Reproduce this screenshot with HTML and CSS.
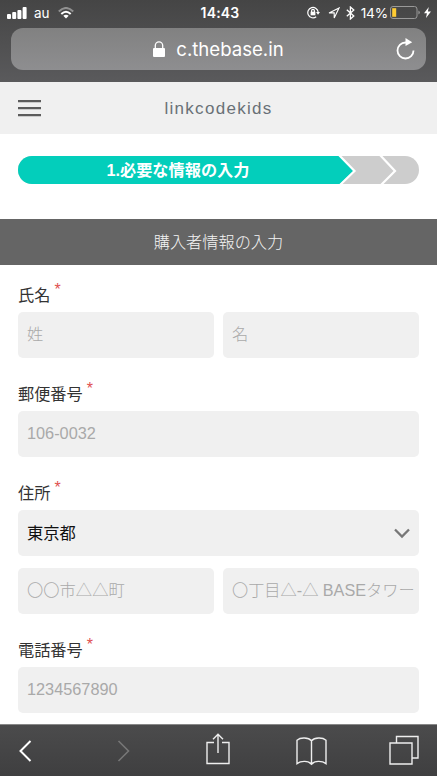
FILE: index.html
```html
<!DOCTYPE html>
<html lang="ja">
<head>
<meta charset="utf-8">
<meta name="viewport" content="width=device-width">
<title>linkcodekids</title>
<link rel="stylesheet" href="styles.css">
</head>
<body>
<div class="phone">
  <div class="browser-top">
    <div class="status">
      <div class="status-left">
        <svg width="20" height="12" viewBox="0 0 20 12" fill="#fff"><rect x="0" y="7" width="4" height="5" rx="1"/><rect x="5.2" y="5" width="4" height="7" rx="1"/><rect x="10.4" y="3" width="4" height="9" rx="1"/><rect x="15.6" y="0" width="4" height="12" rx="1"/></svg>
        <span class="carrier">au</span>
        <svg width="16" height="12" viewBox="0 0 16 12" fill="none" stroke="#fff" stroke-width="2"><path d="M.8 4.5Q8-2.5 15.2 4.5" stroke-opacity=".4"/><path d="M3.3 7Q8 2.5 12.7 7"/><path d="M8 11.5 5.3 8.8Q8 6.8 10.7 8.8Z" fill="#fff" stroke="none"/></svg>
      </div>
      <span class="time">14:43</span>
      <div class="status-right">
        <svg class="lock-rotation" width="13" height="13" viewBox="0 0 13 13" fill="none" stroke="#fff" stroke-width="1.2"><path d="M9.2 10.8A5.2 5.2 0 1 1 11.2 6.2"/><path d="M9 6h4l-2 2.8z" fill="#fff" stroke="none"/><rect x="3.6" y="5.7" width="4.8" height="3.6" fill="#fff" stroke="none"/><path d="M4.6 6V4.7a1.4 1.4 0 0 1 2.8 0V6"/></svg>
        <svg class="location" width="12" height="12" viewBox="0 0 12 12" fill="none" stroke="#fff" stroke-width="1.1"><path d="M1 5.9 11 1 6.2 11V5.9Z"/></svg>
        <svg class="bluetooth" width="9" height="14" viewBox="0 0 9 14" fill="none" stroke="#fff" stroke-width="1.3"><path d="m.8 3.8 7 6.2-3.4 3V1l3.4 3-7 6.2"/></svg>
        <span class="percent">14%</span>
        <svg class="battery" width="31" height="13" viewBox="0 0 31 13"><rect x=".5" y=".5" width="26.5" height="12" rx="2.5" fill="none" stroke="#999"/><rect x="2.2" y="2.2" width="4" height="8.6" fill="#fc3"/><path d="M28.5 4.5Q31 6.5 28.5 8.5z" fill="#aaa"/></svg>
        <svg class="bolt" width="7" height="11" viewBox="0 0 7 11" fill="#fff"><path d="M4.8 0 0 6.2h2.9L2 11l5-6.6H3.9z"/></svg>
      </div>
    </div>
    <div class="address">
      <span></span>
      <div class="domain">
        <svg width="12" height="16" viewBox="0 0 12 16"><rect y="7" width="12" height="9" rx="1" fill="#fff"/><path d="M2.3 8V4.5a3.7 3.7 0 0 1 7.4 0V8" fill="none" stroke="#fff" stroke-width="1.3"/></svg>
        <span>c.thebase.in</span>
      </div>
      <svg class="reload" width="20" height="22" viewBox="0 0 20 22" fill="none" stroke="#fff" stroke-width="1.8"><path d="M11 4.5H9.5a8 8 0 1 0 8 8"/><path d="m9.5 0 6.7 4.2-6.7 3.8z" fill="#fff" stroke="none"/></svg>
    </div>
  </div>

  <header class="site-header">
    <svg class="menu" width="23" height="18" viewBox="0 0 23 18" fill="#5c5c5c"><path d="M0 1h23v2.2H0zM0 8h23v2.2H0zM0 15h23v2.2H0z"/></svg>
    <h1>linkcodekids</h1>
    <span></span>
  </header>

  <main>
    <div class="progress">
      <svg class="progress-shape" width="401" height="28" viewBox="0 0 401 28"><rect width="401" height="28" rx="14" fill="#cdcdcd"/><path d="M14 0H322L335.5 15 322 28H14A14 14 0 0 1 14 0Z" fill="#03cebb"/><path d="m321 -1 15.5 16L322 29M362-1l15 16-14 14" fill="none" stroke="#fff" stroke-width="2.2"/></svg>
      <span class="progress-label">1.必要な情報の入力</span>
    </div>
    <h2>購入者情報の入力</h2>
    <form>
      <section class="group">
        <div class="label">氏名<span class="required">*</span></div>
        <div class="row"><div class="field">姓</div><div class="field">名</div></div>
      </section>
      <section class="group">
        <div class="label">郵便番号<span class="required">*</span></div>
        <div class="field">106-0032</div>
      </section>
      <section class="group">
        <div class="label">住所<span class="required">*</span></div>
        <div class="field select"><span>東京都</span><svg width="16" height="11" viewBox="0 0 16 11" fill="none" stroke="#777" stroke-width="2.3"><path d="m1 1.5 7 7 7-7"/></svg></div>
        <div class="row address-row"><div class="field">〇〇市△△町</div><div class="field street">〇丁目△-△ BASEタワー</div></div>
      </section>
      <section class="group">
        <div class="label">電話番号<span class="required">*</span></div>
        <div class="field">1234567890</div>
      </section>
    </form>
  </main>

  <nav class="toolbar">
    <svg class="back" width="13" height="22" viewBox="0 0 13 22" fill="none" stroke="#fff" stroke-width="2"><path d="M11.5 1 1.5 11l10 10"/></svg>
    <svg class="forward" width="13" height="22" viewBox="0 0 13 22" fill="none" stroke="#777" stroke-width="1.6"><path d="m1.5 1 10 10-10 10"/></svg>
    <svg class="share" width="24" height="32" viewBox="0 0 24 32" fill="none" stroke="#eee" stroke-width="1.4"><path d="M8 9.5H1v21h22v-21h-7M12 20V1.5M7 6.2l5-5 5 5"/></svg>
    <svg class="book" width="31" height="29" viewBox="0 0 31 29" fill="none" stroke="#eee" stroke-width="1.4"><path d="M15.5 3.8C12.5.3 4.5.1 1 3.2v23.4c4-3 11.5-3 14.5.6 3-3.6 10.5-3.6 14.5-.6V3.2C26.5.1 18.5.3 15.5 3.8Zm0 0v24"/></svg>
    <svg class="tabs" width="30" height="30" viewBox="0 0 30 30" fill="none" stroke="#eee" stroke-width="1.4"><path d="M1 8h22v21H1zM7.5 8V1.5H29v21.5h-6"/></svg>
  </nav>
</div>
</body>
</html>
```
FILE: styles.css
```css
* { box-sizing: border-box; }
body { margin: 0; background: #fff; }
svg { display: block; flex: none; }
.phone {
  width: 437px;
  height: 776px;
  display: flex;
  flex-direction: column;
  overflow: hidden;
  font-family: "Liberation Sans", "Noto Sans CJK JP", sans-serif;
}
.browser-top {
  height: 82px;
  flex: none;
  padding: 0 11px;
  background: linear-gradient(#454545, #5a5a5c);
  color: #fff;
  font-family: Inter, sans-serif;
}
.status {
  height: 28px;
  margin: 0 -6px 0 -4px;
  display: grid;
  grid-template-columns: 1fr auto 1fr;
  align-items: center;
}
.status-left, .status-right { display: flex; align-items: center; height: 24px; margin-top: -3px; }
.carrier { margin: 0 8px 0 7px; font-size: 13.5px; line-height: 24px; }
.time { font-size: 14px; font-weight: 600; line-height: 24px; margin: -3px -1px 0 0; letter-spacing: .2px; }
.status-right { justify-content: flex-end; }
.location { margin-left: 8px; }
.bluetooth { margin-left: 6px; }
.percent { margin: 0 2px 0 6px; font-size: 13.7px; line-height: 24px; letter-spacing: -.2px; }
.bolt { margin: 0 1px 0 3px; }
.address {
  height: 42px;
  padding: 0 10px;
  border-radius: 12px;
  background: linear-gradient(#818181, #8e8e90);
  display: grid;
  grid-template-columns: 1fr auto 1fr;
  align-items: center;
}
.domain { display: flex; align-items: center; gap: 11px; font-size: 18.6px; line-height: 24px; }
.reload { justify-self: end; }
.site-header {
  height: 52px;
  flex: none;
  padding: 0 18px;
  display: grid;
  grid-template-columns: 1fr auto 1fr;
  align-items: center;
  background: #f0f0f0;
}
h1 {
  margin: 0;
  padding-top: 1px;
  font: 400 17px/24px "Liberation Sans", sans-serif;
  letter-spacing: 1.3px;
  color: #697077;
}
.progress {
  margin: 22px 18px 35px;
  width: 401px;
  height: 28px;
  display: grid;
}
.progress-shape, .progress-label { grid-area: 1 / 1; }
.progress-label {
  width: 320px;
  text-align: center;
  color: #fff;
  font-size: 16.2px;
  font-weight: 700;
  line-height: 29px;
}
h2 {
  margin: 0;
  height: 46px;
  background: #656565;
  color: #f4f4f4;
  font-size: 16.2px;
  font-weight: 300;
  line-height: 46px;
  text-align: center;
}
form { padding: 17px 18px 0; display: flex; flex-direction: column; gap: 23px; }
.label { height: 30px; font-size: 16.2px; line-height: 26px; color: #333; display: flex; }
.required { margin: -5px 0 0 4px; color: #e05050; font-size: 16px; line-height: 26px; }
.row { display: grid; grid-template-columns: repeat(2, minmax(0, 1fr)); gap: 9px; }
.field {
  height: 46px;
  padding: 0 9px;
  border-radius: 5px;
  background: #f0f0f0;
  color: #a9a9a9;
  font-size: 16.3px;
  line-height: 45px;
  font-weight: 300;
  white-space: nowrap;
}
.street { padding-right: 0; font-size: 16.2px; }
.select { color: #111; font-weight: 400; line-height: 43px; display: flex; align-items: center; justify-content: space-between; }
.address-row { margin-top: 12px; }
.toolbar {
  height: 52px;
  margin-top: auto;
  flex: none;
  display: flex;
  align-items: flex-start;
  border-top: 1px solid #888;
  background: linear-gradient(#4b4b4c, #3f3f40);
}
.back { margin: 15px 0 0 19px; }
.forward { margin: 15px 0 0 85px; }
.share { margin: 8px 0 0 76px; }
.book { margin: 12px 0 0 66px; }
.tabs { margin: 10px 0 0 62px; }
```
